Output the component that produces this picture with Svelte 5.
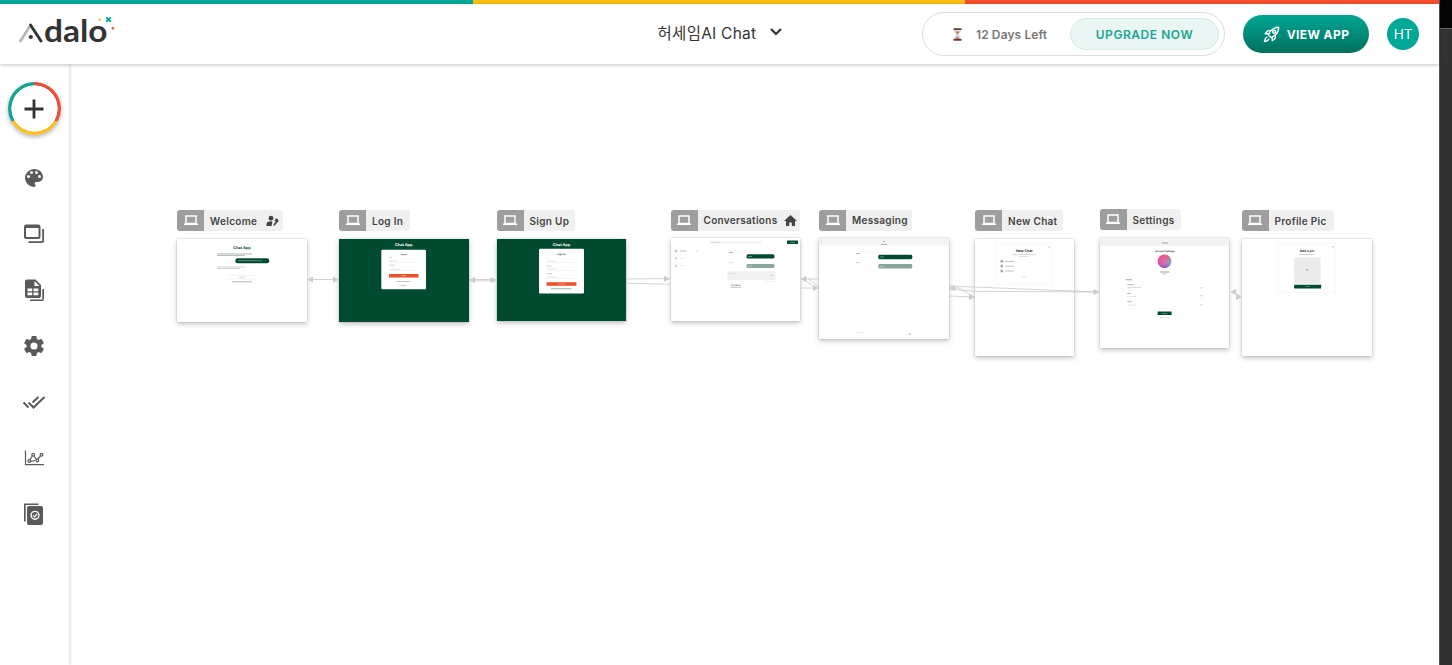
<script lang="ts">
  type Bar = [x: number, y: number, w: number, h: number, fill: string, r?: number];
  type Caption = [x: number, y: number, size: number, text: string, fill: string];

  interface Screen {
    name: string;
    x: number;
    y: number;
    w: number;
    h: number;
    tag: number;
    badge?: string;
    bg?: string;
    bars: Bar[];
    captions: Caption[];
  }

  const green = '#004b30';
  const sage = '#86a799';
  const orange = '#ec5029';
  const ink = '#a9aeab';
  const pale = '#e2e2e2';
  const mist = '#f1f1f1';

  const screens: Screen[] = [
    {
      name: 'Welcome', x: 177, y: 238.5, w: 129.5, h: 83, tag: 106, badge: 'user',
      bars: [
        [40, 14.6, 35, 0.7, '#8a938f'], [40, 16.4, 28, 0.6, '#8a938f'],
        [58.3, 19.3, 34, 5, green, 2.5], [61, 21.5, 24, 0.6, '#8fb0a2'],
        [40, 27.7, 28, 0.6, '#b5b5b5'], [40, 29.4, 23, 0.6, '#b5b5b5'],
        [50, 36.5, 29, 0.4, pale], [50, 39.8, 29, 0.4, pale], [62, 37.9, 6, 0.5, ink],
        [55, 42.6, 20, 0.6, '#77877f']
      ],
      captions: [[65, 10.3, 3.8, 'Chat App', green]]
    },
    {
      name: 'Log In', x: 339, y: 238.5, w: 129.5, h: 83, tag: 71, bg: green,
      bars: [
        [42.3, 10.8, 44.7, 39.4, '#fff', 1.3],
        [50, 17.9, 3, 0.6, ink], [50, 21.7, 9, 0.5, '#ccc'], [50, 23.2, 29, 0.3, pale],
        [50, 25.8, 6, 0.6, ink], [50, 30, 11, 0.5, '#ccc'], [50, 31.5, 29, 0.3, pale],
        [50, 35.1, 29.6, 3.4, orange, 0.6], [62, 36.5, 5, 0.6, '#f9c1b2'],
        [57.5, 42.3, 14, 0.7, ink], [61.5, 46.4, 6, 0.7, ink]
      ],
      captions: [[64.7, 7.4, 3.8, 'Chat App', '#fff'], [64.7, 16, 2, 'Log In', '#333']]
    },
    {
      name: 'Sign Up', x: 496.5, y: 238.5, w: 129, h: 82.5, tag: 78.5, bg: green,
      bars: [
        [42, 9.8, 45, 44.7, '#fff', 1.3],
        [49.5, 18.5, 3, 0.6, pale], [49.5, 21.8, 9, 0.5, '#ccc'], [49.5, 23.5, 29, 0.3, pale],
        [49.5, 26.7, 5, 0.6, ink], [49.5, 29.7, 10, 0.5, '#ccc'], [49.5, 31.5, 29, 0.3, pale],
        [49.5, 34.5, 6, 0.6, ink], [49.5, 37.8, 11, 0.5, '#ccc'], [49.5, 39.5, 29, 0.3, pale],
        [49.5, 43.2, 30, 3.5, orange, 0.6], [61, 44.7, 7, 0.6, '#f9c1b2'],
        [54, 49.5, 20.5, 0.7, '#7f8b86']
      ],
      captions: [[64.5, 7, 3.8, 'Chat App', '#fff'], [64.5, 16, 2.2, 'Sign Up', '#333']]
    },
    {
      name: 'Conversations', x: 670.5, y: 238, w: 129.5, h: 83, tag: 129.5, badge: 'home',
      bars: [
        [38.5, 2.8, 52, 2.9, '#f5f5f5', 1], [39.5, 4, 9, 0.5, '#c4c4c4'],
        [116, 2.5, 11, 3.5, green, 0.5], [119, 4, 5, 0.6, '#8fb0a2'],
        [3.5, 11.5, 3, 3, '#c6c6c6', 1.5], [3.5, 18.8, 3, 3, '#ddd', 1.5], [3.5, 26.2, 3, 3, '#ddd', 1.5],
        [9, 12.6, 6.5, 0.8, '#aaa'], [9, 20, 6, 0.6, pale], [9, 27.5, 6, 0.6, pale],
        [3.5, 16.3, 24, 0.3, mist], [3.5, 24, 24, 0.3, mist],
        [24.5, 12.6, 2.5, 0.8, '#ccc'], [24.5, 20, 2.5, 0.6, mist], [24.5, 27.5, 2.5, 0.6, mist],
        [58, 12.6, 29, 2.6, '#fafafa', 1], [58, 14.2, 4, 0.9, '#aaa'],
        [75.5, 16.3, 28, 4.2, green, 1.6], [77, 18.2, 4, 0.6, '#9fbdb1'],
        [58, 24, 4, 0.6, '#c5c5c5'], [75.5, 26, 28, 4, sage, 1.6], [77, 27.8, 4, 0.6, '#d5e3dc'],
        [56.5, 33.3, 48, 8.7, mist, 0.5], [57.5, 35, 8, 0.5, '#d0d0d0'], [99.5, 37, 2.5, 0.7, '#bbb'],
        [94, 43.3, 10, 0.5, pale], [59.5, 49.4, 10.5, 0.6, ink]
      ],
      captions: [[64.8, 47.8, 2.5, 'Try Now', '#777']]
    },
    {
      name: 'Messaging', x: 819, y: 238, w: 129.5, h: 100.5, tag: 93,
      bars: [
        [0, 0, 130, 7.6, '#f4f4f4'], [2.2, 3, 0.6, 1.5, '#bbb'],
        [64, 3, 2, 1, '#aaa'], [62, 6, 6, 0.7, '#999'],
        [37, 15, 4, 0.8, '#aaa'], [44, 13.5, 28, 1.6, '#fafafa'],
        [59.3, 16.8, 34, 4.4, green, 1.4], [61, 18.7, 4, 0.6, '#9fbdb1'],
        [37, 24, 4, 0.7, '#c4c4c4'], [59.3, 26.1, 34, 4.4, sage, 1.4], [61, 28, 4, 0.6, '#d5e3dc'],
        [37, 94, 8, 0.5, '#d0d0d0'], [89.5, 95.5, 2.5, 1.2, '#bbb']
      ],
      captions: []
    },
    {
      name: 'New Chat', x: 975, y: 238.5, w: 98.5, h: 117.5, tag: 88,
      bars: [
        [20.7, 4.5, 57, 0.3, '#e9e9e9'], [20.7, 45.5, 57, 0.3, '#e9e9e9'],
        [20.7, 4.5, 0.3, 41, '#e9e9e9'], [77.4, 4.5, 0.3, 41, '#e9e9e9'],
        [73.6, 7.2, 1.4, 1.4, '#aaa', 0.7],
        [37.3, 15.5, 23.5, 0.6, '#bbb'], [43.5, 17.2, 10, 0.5, '#c5c5c5'],
        [25.3, 20.8, 3, 3, '#aaa', 1.5], [25.3, 25.6, 3, 3, '#aaa', 1.5], [25.3, 30.4, 3, 3, '#aaa', 1.5],
        [30.3, 22, 8.7, 0.7, '#aaa'], [30.3, 26.8, 8.7, 0.7, '#aaa'], [30.3, 31.6, 8.7, 0.7, '#aaa'],
        [46.5, 37.6, 5, 0.5, '#c5c5c5']
      ],
      captions: [[49.2, 12.6, 3.5, 'New Chat', '#333']]
    },
    {
      name: 'Settings', x: 1099.5, y: 237.5, w: 129.5, h: 110, tag: 81,
      bars: [
        [0, 0, 130, 8, '#f4f4f4'], [2.4, 3.7, 0.6, 1.4, '#bbb'], [61.5, 4.5, 6.5, 0.9, '#8c9691'],
        [60, 33.6, 9.5, 0.8, '#888'], [62.7, 35.6, 3.8, 0.6, '#aaa'],
        [25.8, 41.4, 6, 0.8, '#888'],
        [27.2, 46.4, 6.5, 0.7, '#999'], [27.2, 49.4, 14, 0.5, '#b5b5b5'], [26, 52.2, 77, 0.3, mist],
        [27.2, 55.2, 4, 0.7, '#999'], [27.2, 58.4, 9, 0.5, '#ccc'], [26, 61.2, 77, 0.3, mist],
        [27.2, 63.5, 5, 0.7, '#999'], [27.2, 66.8, 8, 0.5, '#ccc'],
        [99.7, 49.6, 3.4, 0.6, '#bbb'], [99.7, 57.6, 3.4, 0.6, '#bbb'], [99.7, 66.6, 3.4, 0.6, '#bbb'],
        [57.6, 73.5, 14, 3.4, green, 0.4], [61.5, 75, 6, 0.5, '#a2c0b4'],
        [59, 79.4, 11, 0.5, '#d0d0d0']
      ],
      captions: [[64.8, 13.8, 2.3, 'Account Settings', '#333']]
    },
    {
      name: 'Profile Pic', x: 1241.5, y: 238.5, w: 130, h: 117.5, tag: 92,
      bars: [
        [36, 4.5, 58, 0.3, '#e9e9e9'], [36, 53.7, 58, 0.3, '#e9e9e9'],
        [36, 4.5, 0.3, 49.4, '#e9e9e9'], [93.7, 4.5, 0.3, 49.4, '#e9e9e9'],
        [90, 7.2, 1.4, 1.4, '#aaa', 0.7], [57, 15.3, 16, 0.6, '#bbb'],
        [52.1, 18.5, 26.5, 26.3, '#ebebeb'], [64.2, 30, 2, 1.6, '#999', 0.7],
        [52.1, 45.8, 27, 3.6, green, 0.5], [63.5, 47.4, 4, 0.5, '#a2c0b4']
      ],
      captions: [[65.1, 12.7, 3.3, 'Add a pic', '#333']]
    }
  ];

  const links = [
    'M307 279.5H339', 'M469 279.5H496', 'M469 280.8H496',
    'M626 279L670 278.5', 'M626 283.3L670 284.3',
    'M801 279H819', 'M801 288H819', 'M803 279L816 288', 'M808 279L819 287',
    'M949 286L1062 290.6L1099 292', 'M949 289L975 291.3L1099 292', 'M949 288H959L974 297',
    'M949 296L975 297', 'M1232 292L1240 296'
  ];

  // tip of each arrow and the way it points
  const heads: [number, number, number][] = [
    [307, 279.5, -1], [339, 279.5, 1], [469, 280, -1], [496.5, 280, 1],
    [670, 278.7, 1], [800.5, 279, -1], [819, 288, 1], [949, 288, -1],
    [975, 297, 1], [1099.5, 292, 1], [1230, 292, -1], [1242, 297, 1]
  ];

  const tools = ['palette', 'screens', 'data', 'settings', 'checks', 'analytics', 'versions'];
</script>

<div class="window">
  <div class="app">
    <div class="stripe"><i></i><i></i><i></i></div>

    <header>
      <svg class="logo" width="100" height="48" viewBox="0 -8 100 48" aria-label="Adalo">
        <path d="M2.5 26L11 12.5" stroke="#b5b5b5" stroke-width="2.7" stroke-linecap="round" />
        <path d="M12.5 10L23 26" stroke="#333" stroke-width="3" stroke-linecap="round" />
        <circle cx="12.8" cy="22" r="2.1" fill="#333" />
        <text x="26" y="26.7" textLength="63.5" lengthAdjust="spacingAndGlyphs">dalo</text>
        <circle cx="81.5" cy="4.6" r="1.3" fill="#ffc22e" />
        <path d="M88.2 2.4l4.6 4.4m0-4.4l-4.6 4.4" stroke="#00a898" stroke-width="1.9" />
        <path d="M93.5 13.2h2.6m-1.3-1.3v2.6" stroke="#f05032" stroke-width="1.5" />
      </svg>

      <button class="title">
        <span>허세임AI Chat</span>
        <svg width="14" height="10" viewBox="0 0 14 10"><path d="M2 2l5 5 5-5" fill="none" stroke="#333" stroke-width="2.1" /></svg>
      </button>

      <div class="actions">
        <div class="trial">
          <svg width="9" height="13" viewBox="0 0 9 13">
            <path d="M1.7 1.5h5.6v2.2L5.2 6.5l2.1 2.8v2.2H1.7V9.3L3.8 6.5 1.7 3.7z" fill="#dbe3e7" stroke="#a6acae" stroke-width=".4" />
            <path d="M2.3 3.4h4.4L4.5 6.3zM2 11.3l2.5-3 2.5 3z" fill="#b5794c" />
            <path d="M.5 1.1h8M.5 11.9h8" stroke="#67382f" stroke-width="1.6" />
          </svg>
          <span>12 Days Left</span>
          <button class="upgrade">UPGRADE NOW</button>
        </div>
        <button class="view">
          <svg width="17" height="17" viewBox="0 0 17 17" fill="none" stroke="#fff" stroke-width="1.4" stroke-linejoin="round">
            <path d="M5.5 9C7 4.8 10.5 1.5 15.7 1.3 15.6 6.5 12.3 10 8.1 11.6z" />
            <path d="M6 7.8L2.2 7.7 4.5 4.9 8 4.5M9.2 11l.1 3.8 2.8-2.3.3-3.5M4.4 11C2.3 11.3 2 13 1.5 15.5 4 15.2 5.7 14.7 6 12.6" />
            <circle cx="11.2" cy="5.8" r="1.5" />
          </svg>
          <span>VIEW APP</span>
        </button>
        <div class="avatar">HT</div>
      </div>
    </header>

    <div class="body">
      <nav>
        <button class="add" aria-label="Add">
          <svg width="20" height="20" viewBox="0 0 20 20"><path d="M10 .5v19M.5 10h19" stroke="#333" stroke-width="2.8" /></svg>
        </button>
        {#each tools as tool}
          <button class="tool" aria-label={tool}>
            <svg width="24" height="24" viewBox="0 0 24 24" fill="#5a5a5a">
              {#if tool === 'palette'}
                <path d="M12 3a9 9 0 0 0 0 18c.8 0 1.5-.7 1.5-1.5 0-.4-.2-.7-.4-1-.2-.3-.4-.6-.4-1 0-.8.7-1.5 1.5-1.5H16a5 5 0 0 0 5-5c0-4.400-4-8-9-8zm-5.500 9a1.500 1.500 0 1 1 0-3 1.500 1.500 0 0 1 0 3zm3-4a1.500 1.500 0 1 1 0-3 1.500 1.500 0 0 1 0 3zm5 0a1.500 1.500 0 1 1 0-3 1.500 1.500 0 0 1 0 3zm3 4a1.500 1.500 0 1 1 0-3 1.500 1.500 0 0 1 0 3z" />
              {:else if tool === 'screens'}
                <path fill-rule="evenodd" d="M4 2.5h12.500a2 2 0 0 1 2 2V15a2 2 0 0 1-2 2H4a2 2 0 0 1-2-2V4.500a2 2 0 0 1 2-2zM4 6v9h12.500V6z" />
                <path d="M20.200 7H22v12a2 2 0 0 1-2 2H6.500v-1.800h13.700z" />
              {:else if tool === 'data'}
                <path fill-rule="evenodd" d="M5 1.500h8.500L19 7v11a2 2 0 0 1-2 2H5a2 2 0 0 1-2-2V3.500a2 2 0 0 1 2-2zM12.500 3v5h5zM5.500 10.500v2.700h4.700v-2.700zm6 0v2.700h4.800v-2.700zm-6 4v2.700h4.700v-2.700zm6 0v2.700h4.800v-2.700z" />
                <path d="M20.300 11H22v10a2 2 0 0 1-2 2H8v-1.600h12.300z" />
              {:else if tool === 'settings'}
                <path d="M19.400 13a7.500 7.500 0 0 0 0-2l2.200-1.600a.5.500 0 0 0 .1-.7l-2-3.500a.5.500 0 0 0-.6-.2l-2.500 1a7 7 0 0 0-1.700-1l-.4-2.600a.5.500 0 0 0-.5-.4h-4a.5.500 0 0 0-.5.400L9.100 5a7 7 0 0 0-1.700 1L4.900 5a.5.500 0 0 0-.6.200l-2 3.500c-.1.200-.1.500.1.700L4.600 11a7.500 7.500 0 0 0 0 2l-2.200 1.600a.5.500 0 0 0-.1.700l2 3.500c.1.200.4.300.6.200l2.500-1a7 7 0 0 0 1.700 1l.4 2.600c0 .2.200.4.500.4h4c.3 0 .5-.2.500-.4l.4-2.600a7 7 0 0 0 1.700-1l2.500 1c.2.100.5 0 .6-.2l2-3.500a.5.500 0 0 0-.1-.7zM12 15.500a3.500 3.500 0 1 1 0-7 3.500 3.500 0 0 1 0 7z" />
              {:else if tool === 'checks'}
                <path d="M1.500 12.500l5 5M6.500 12.500l5 5L22.500 7M10.500 12.500L16.500 7" fill="none" stroke="#5a5a5a" stroke-width="2" />
              {:else if tool === 'analytics'}
                <g fill="none" stroke="#5a5a5a" stroke-width="1.2">
                  <path d="M3.500 4.500v14.200H22M8 13.700l2.300-3.700M12 10l2.500 3.500M16 13l2.500-3M8.700 15.500l4.500-1" />
                  <circle cx="7.300" cy="15" r="1.400" /><circle cx="11.200" cy="8.700" r="1.400" />
                  <circle cx="15.300" cy="14.500" r="1.400" /><circle cx="19.500" cy="8.700" r="1.400" />
                </g>
              {:else}
                <path d="M2 1.500h14.500V3H3.700v16.500H2z" />
                <path fill-rule="evenodd" d="M7 4h12a2 2 0 0 1 2 2v15a2 2 0 0 1-2 2H7a2 2 0 0 1-2-2V6a2 2 0 0 1 2-2zm6 4.700a4.600 4.600 0 1 0 0 9.200 4.600 4.600 0 0 0 0-9.200z" />
                <circle cx="13" cy="13.300" r="3.200" /><path d="M11 13.300l1.500 1.500 2.700-2.800" stroke="#fff" stroke-width="1.2" fill="none" />
              {/if}
            </svg>
          </button>
        {/each}
      </nav>

      <main>
        {#each screens as screen}
          <section style:left="{screen.x - 69}px" style:top="{screen.y - 92.5}px">
            <div class="tag" style:width="{screen.tag}px">
              <span class="device">
                <svg width="14" height="11" viewBox="0 0 14 11"><path d="M2 1h10v7.500H2z" fill="none" stroke="#fff" stroke-width="1.500" /><path d="M0 8.500h14V10H0z" fill="#fff" /></svg>
              </span>
              <span class="name">{screen.name}</span>
              {#if screen.badge === 'user'}
                <svg class="badge" width="13" height="12" viewBox="0 0 13 12" fill="#444">
                  <circle cx="5" cy="3.200" r="2.400" /><path d="M.5 11V9c0-2 2-2.800 4.500-2.800l1.500.2L5.500 11z" />
                  <path d="M7.300 11l.5-2 3.500-4.300 1.300 1.200L9 10.300z" /><circle cx="10.500" cy="5.200" r="1.700" />
                </svg>
              {:else if screen.badge === 'home'}
                <svg class="badge home" width="13" height="11" viewBox="0 0 13 11"><path d="M6.500 0L0 6h2v5h3.200V7.500h2.600V11H11V6h2z" fill="#444" /></svg>
              {/if}
            </div>
            <svg class="preview" width={screen.w} height={screen.h} style:background={screen.bg ?? '#fff'}>
              {#each screen.bars as [x, y, w, h, fill, r]}
                <rect {x} {y} width={w} height={h} rx={r ?? 0} {fill} />
              {/each}
              {#if screen.name === 'Settings'}
                <defs>
                  <linearGradient id="wheel"><stop offset="0" stop-color="#f43aa0" /><stop offset=".5" stop-color="#e274a4" /><stop offset="1" stop-color="#50c3b5" /></linearGradient>
                  <linearGradient id="shade" x2="0" y2="1"><stop offset=".2" stop-color="#ff4d70" stop-opacity=".6" /><stop offset=".6" stop-color="#b070d0" stop-opacity=".2" /><stop offset="1" stop-color="#8337dc" stop-opacity=".8" /></linearGradient>
                </defs>
                <circle cx="64.5" cy="23.2" r="6.8" fill="url(#wheel)" />
                <circle cx="64.5" cy="23.2" r="6.8" fill="url(#shade)" />
              {/if}
              {#each screen.captions as [x, y, size, text, fill]}
                <text {x} {y} font-size={size} {fill}>{text}</text>
              {/each}
            </svg>
          </section>
        {/each}

        <svg class="links" width="1370" height="601" viewBox="69 64 1370 601">
          {#each links as d}
            <path {d} />
          {/each}
          {#each heads as [x, y, dir]}
            <polygon points="{x},{y} {x - 6 * dir},{y - 3} {x - 6 * dir},{y + 3}" />
          {/each}
        </svg>
      </main>
    </div>
  </div>
  <aside></aside>
</div>

<style>
  :global(body) {
    margin: 0;
    background: #fff;
  }

  button {
    padding: 0;
    border: 0;
    background: none;
    font: inherit;
    color: inherit;
  }

  svg {
    display: block;
    flex: none;
  }

  .window {
    display: flex;
    height: 665px;
    overflow: hidden;
    font-family: Inter, "Noto Sans CJK KR", sans-serif;
    color: #333;
  }

  .app {
    width: 1439px;
    flex: none;
    display: flex;
    flex-direction: column;
  }

  aside {
    flex: 1;
    border-left: 1px solid #555;
    background: linear-gradient(#050505 28px, #666 28px, #666 29px, #323232 29px);
  }

  .stripe {
    display: grid;
    grid-template-columns: 472.5px 492.5px 1fr;
    height: 4px;
  }

  .stripe i {
    background: #00a898;
  }

  .stripe i:nth-child(2) {
    background: #ffc015;
  }

  .stripe i:nth-child(3) {
    background: #f5502e;
  }

  header {
    display: grid;
    grid-template-columns: 1fr auto 1fr;
    align-items: center;
    height: 60px;
    padding: 0 20px 0 18px;
    box-sizing: border-box;
    background: #fff;
    box-shadow: 0 1px 4px rgba(0, 0, 0, 0.24);
    position: relative;
    z-index: 2;
  }

  .logo {
    margin-bottom: 6px;
  }

  .logo text {
    font: 700 30px Lato, sans-serif;
    fill: #333;
  }

  .title {
    display: flex;
    align-items: center;
    gap: 13px;
    margin: 0 0 5px 4px;
    font-size: 15.5px;
    letter-spacing: 0.25px;
  }

  .actions {
    display: flex;
    align-items: center;
    justify-content: flex-end;
    gap: 18px;
  }

  .trial {
    display: flex;
    align-items: center;
    width: 303px;
    height: 44px;
    padding: 0 5px 0 30px;
    box-sizing: border-box;
    border: 1px solid #ddd;
    border-radius: 22px;
    font-size: 12px;
    font-weight: 600;
    color: #777;
  }

  .trial span {
    margin-left: 14px;
    letter-spacing: 0.1px;
  }

  .upgrade {
    width: 149px;
    height: 32px;
    margin-left: auto;
    border: 1px solid #d3ebe6;
    border-radius: 16px;
    background: #eaf6f4;
    color: #1aa595;
    letter-spacing: 0.55px;
  }

  .view {
    display: flex;
    align-items: center;
    justify-content: center;
    gap: 7px;
    width: 126px;
    height: 38px;
    border-radius: 19px;
    background: linear-gradient(#00a693, #00705f);
    color: #fff;
    font-size: 12px;
    font-weight: 700;
    letter-spacing: 0.4px;
  }

  .avatar {
    width: 32px;
    height: 32px;
    border-radius: 50%;
    background: #00a898;
    color: #fff;
    font-size: 13.5px;
    line-height: 32px;
    text-align: center;
  }

  .body {
    display: flex;
    flex: 1;
  }

  nav {
    display: flex;
    flex-direction: column;
    align-items: center;
    width: 69px;
    padding: 18px 1px 0 0;
    box-sizing: border-box;
    box-shadow: 1px 0 3px rgba(0, 0, 0, 0.16);
  }

  .add {
    display: grid;
    place-items: center;
    width: 53px;
    height: 53px;
    margin-bottom: 15px;
    border-radius: 50%;
    background: radial-gradient(circle, #fff 22.8px, transparent 23.4px),
      conic-gradient(#e9503a 0 120deg, #f8c024 120deg 240deg, #15a493 240deg);
    box-shadow: 0 2px 4px rgba(0, 0, 0, 0.3);
  }

  .tool {
    display: grid;
    place-items: center;
    width: 56px;
    height: 56px;
  }

  main {
    flex: 1;
    position: relative;
  }

  section {
    position: absolute;
  }

  .tag {
    display: flex;
    align-items: center;
    height: 21px;
    margin-bottom: 7.5px;
    border-radius: 3px;
    overflow: hidden;
    background: #f0f0f0;
    color: #444;
    font-size: 10px;
    font-weight: 600;
    letter-spacing: 0.3px;
  }

  .device {
    display: grid;
    place-items: center;
    width: 27px;
    height: 21px;
    margin-right: 6px;
    background: #9e9e9e;
  }

  .name {
    white-space: nowrap;
  }

  .badge {
    margin: 0 4px 0 auto;
  }

  .home {
    margin-right: 3px;
  }

  .preview {
    box-shadow: 0 0 1px rgba(0, 0, 0, 0.3), 0 2px 5px rgba(0, 0, 0, 0.24);
  }

  .preview text {
    font-weight: 700;
    text-anchor: middle;
    text-rendering: geometricPrecision;
  }

  .links {
    position: absolute;
    inset: 0;
  }

  .links path {
    fill: none;
    stroke: #c8c8c8;
    stroke-width: 0.8;
  }

  .links polygon {
    fill: #cbcbcb;
  }
</style>
